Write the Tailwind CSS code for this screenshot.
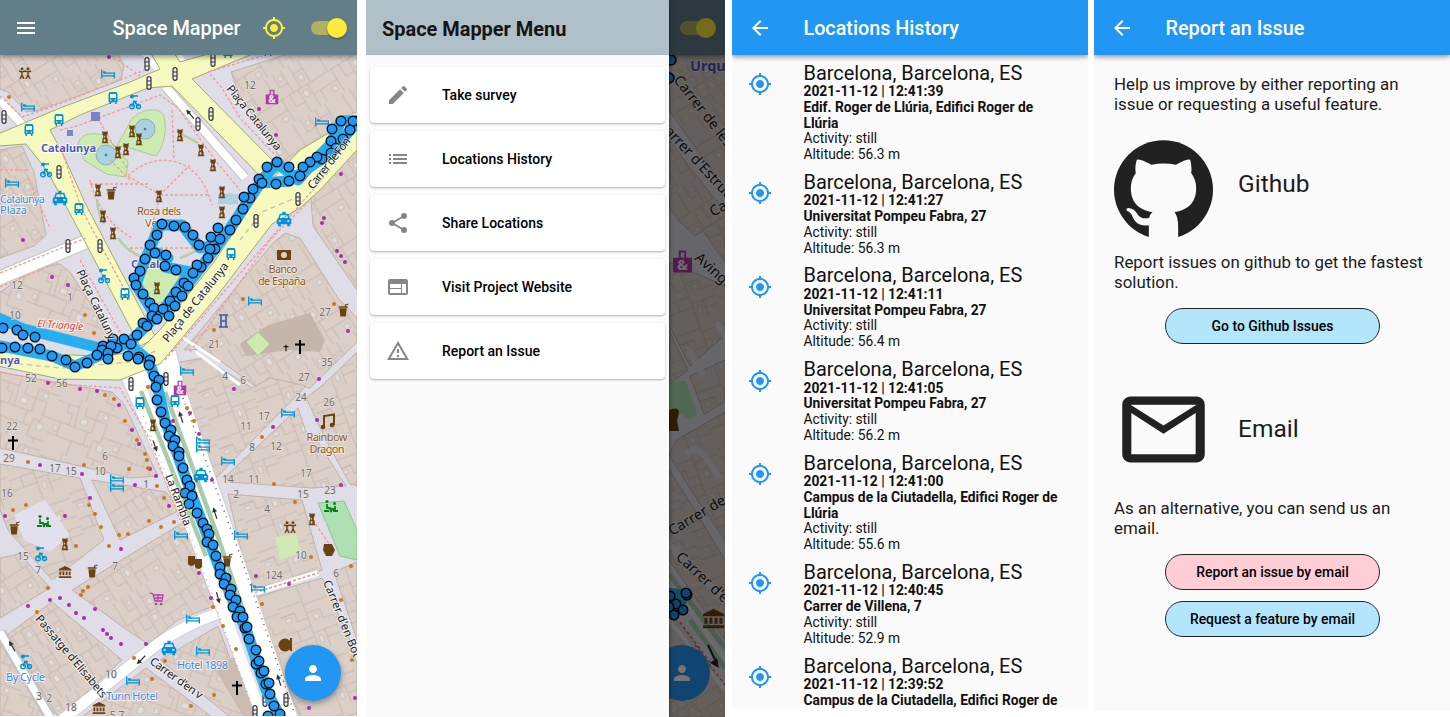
<!DOCTYPE html>
<html lang="en">
<head>
<meta charset="utf-8">
<title>Space Mapper</title>
<script src="https://cdn.jsdelivr.net/npm/@tailwindcss/browser@4"></script>
</head>
<body class="h-[717px] w-[1450px] overflow-hidden bg-white font-['Roboto',sans-serif] text-[#1b1b1b]">

<svg class="absolute size-0" aria-hidden="true">
  <defs>
    <symbol id="gps" viewBox="0 0 24 24"><path fill="currentColor" d="M12 8c-2.21 0-4 1.79-4 4s1.79 4 4 4 4-1.79 4-4-1.79-4-4-4zm8.94 3c-.46-4.17-3.77-7.48-7.94-7.94V1h-2v2.060C6.830 3.520 3.520 6.830 3.060 11H1v2h2.060c.46 4.170 3.770 7.480 7.940 7.940V23h2v-2.060c4.170-.46 7.480-3.770 7.940-7.940H23v-2h-2.060zM12 19c-3.870 0-7-3.130-7-7s3.130-7 7-7 7 3.130 7 7-3.130 7-7 7z"/></symbol>
    <symbol id="back" viewBox="0 0 24 24"><path fill="currentColor" d="M20 11H7.830l5.590-5.590L12 4l-8 8 8 8 1.410-1.410L7.830 13H20v-2z"/></symbol>
    <symbol id="person" viewBox="0 0 24 24"><path fill="currentColor" d="M12 12c2.210 0 4-1.790 4-4s-1.790-4-4-4-4 1.790-4 4 1.790 4 4 4zm0 2c-2.670 0-8 1.340-8 4v2h16v-2c0-2.660-5.330-4-8-4z"/></symbol>
    <symbol id="bed" viewBox="0 0 16 10" overflow="visible"><path d="M1 0V10M15 3V10M1 7H15M4 4H14" fill="none" stroke="#0092da" stroke-width="1.500"/><rect x="2.500" y="2" width="3" height="2.500" fill="#0092da"/></symbol>
    <symbol id="bus" viewBox="0 0 10 12"><path fill="#0092da" fill-rule="evenodd" d="M1.500 0h7L9.500 2v8H8.500v2H7v-2H3v2H1.500v-2H.5V2zM2 2v4h6V2zM2 7.500v1.200h1.500V7.500zM6.500 7.500v1.200H8V7.500z"/></symbol>
    <symbol id="taxi" viewBox="0 0 14 14"><path fill="#0092da" fill-rule="evenodd" d="M5.500 0h3v2H11l1.300 4L14 7.500V12h-1.500v2H10v-2H4v2H1.500v-2H0V7.500L1.700 6 3 2h2.500zM4 3.500L3.200 6h7.600L10 3.500zM2 8v1.500h2V8zm8 0v1.500h2V8z"/></symbol>
    <symbol id="light" viewBox="0 0 6 14"><rect x="1" y=".7" width="4" height="12.600" rx="2" fill="#eee" stroke="#333" stroke-width="1.200"/><path d="M1 5h4M1 9h4" stroke="#333"/></symbol>
    <symbol id="bike" viewBox="0 0 12 15" overflow="visible"><g fill="none" stroke="#0092da" stroke-width="1.400"><circle cx="3" cy="12" r="2.300"/><circle cx="9.500" cy="12" r="2"/><path d="M3 12L5 7l4.500 5M4 7h4M4 1.500h5"/></g><circle cx="3" cy="2" r="2" fill="#0092da"/></symbol>
    <symbol id="art" viewBox="0 0 8 14"><path fill="#6b4310" fill-rule="evenodd" d="M1 0h1v1h4V0h1v4L6 5v3l1 1v4h1v1H0v-1h1V9l1-1V5L1 4zM3 5.500v2h1v-2zM2.500 9.500V12h2V9.500z"/></symbol>
    <symbol id="cup" viewBox="0 0 12 14"><path fill="#6b4310" d="M1 5h8l-1 9H2zM0 3h10v1.500H0zM7 1l4-1v1L8 2v1H7z"/></symbol>
    <symbol id="people" viewBox="0 0 14 12"><path fill="none" stroke="#6b4310" stroke-width="1.400" d="M1 4l3 1 3-1 3 1 3-1M4 4v4l-2 4M4 8l2 4M10 4v4l-2 4M10 8l2 4"/><circle cx="4" cy="1.800" r="1.500" fill="#6b4310"/><circle cx="10" cy="1.800" r="1.500" fill="#6b4310"/></symbol>
    <symbol id="play" viewBox="0 0 14 14"><path fill="none" stroke="#0d8018" stroke-width="1.800" d="M3 5v4h3l1 4M11 7v3H8l-1 3M0 12h5M9 12h5"/><circle cx="3" cy="2.500" r="1.600" fill="#0d8018"/><circle cx="10.500" cy="4.500" r="1.500" fill="#0d8018"/></symbol>
    <symbol id="bag" viewBox="0 0 13 15"><path fill="#ac39ac" fill-rule="evenodd" d="M4 0h5v5h4v10H0V5h4zM5.300 1.300V5h2.400V1.300z"/><text x="6.500" y="13.500" text-anchor="middle" font-size="10" font-weight="700" fill="#f3e6f3">&amp;</text></symbol>
    <symbol id="cross" viewBox="0 0 10 14"><path fill="#000" d="M4 0h2v3.500h4v2H6V14H4V5.500H0v-2h4z"/></symbol>
    <symbol id="museum" viewBox="0 0 14 13"><path fill="#6b4310" d="M7 0l7 3.500V5H0V3.500zM1 6h2v4H1zm3.300 0h2v4h-2zm3.400 0h2v4h-2zM11 6h2v4h-2zM0 11h14v2H0z"/></symbol>
    <symbol id="arr" viewBox="0 0 6 12" overflow="visible"><path d="M3 12V3" stroke="#333" stroke-width="1.200"/><path d="M3 0l2.500 5h-5z" fill="#333"/></symbol>
    <pattern id="bldA" width="64" height="58" patternUnits="userSpaceOnUse" patternTransform="rotate(20)">
      <rect width="64" height="58" fill="#dbcfc8"/>
      <path fill="none" stroke="#c3b4aa" stroke-width=".8" d="M0 8h22v-8M22 8l2 20H0M24 28h18V4h22M42 14h12v14h10M10 28v14h-10M10 42h16v16M26 42h12V28M38 42h8v10h18M46 42V34h8v-6M12 8v8h6v12M30 4v10h12M54 52v6"/>
      <path fill="#dfdfdb" stroke="#c3b4aa" stroke-width=".7" d="M28 17h7v6h-7zM4 32h4v6H4zM48 6h5v5h-5zM52 36h6v7h-6z"/>
    </pattern>
    <pattern id="bldB" width="58" height="52" patternUnits="userSpaceOnUse" patternTransform="rotate(-32)">
      <rect width="58" height="52" fill="#dbcfc8"/>
      <path fill="none" stroke="#c3b4aa" stroke-width=".8" d="M0 26h58M8 0v26M17 0v15h9v11M26 15V0M35 0v26M46 0v10h-11M46 10v16M12 26v26M21 26v14h10v12M31 40V26M42 26v26M42 38h16M50 38v14M0 38h12"/>
      <path fill="#dfdfdb" stroke="#c3b4aa" stroke-width=".7" d="M20 5h4v5h-4zM38 14h5v6h-5zM34 30h5v7h-5zM3 42h5v5H3z"/>
    </pattern>
    <pattern id="bldC" width="52" height="60" patternUnits="userSpaceOnUse" patternTransform="rotate(-20)">
      <rect width="52" height="60" fill="#dbcfc8"/>
      <path fill="none" stroke="#c3b4aa" stroke-width=".8" d="M26 0v60M0 8h26M0 17h15v9h11M15 17H0M0 35h26M12 35v11H0M12 46h14M26 12h26M26 21h14v10h12M26 42h26M38 42v18M38 50h14"/>
      <path fill="#dfdfdb" stroke="#c3b4aa" stroke-width=".7" d="M32 24h5v6h-5zM4 20h6v4H4zM30 47h4v7h-4z"/>
    </pattern>
  </defs>
</svg>

<div class="flex items-start">

  <!-- Map screen -->
  <section class="relative h-[716px] w-[357px] shrink-0 overflow-hidden bg-[#dddce8]">
    <svg class="absolute top-0 left-0 block" width="357" height="717" viewBox="0 0 357 717" font-family="Noto Sans, Roboto, sans-serif">
      <rect width="357" height="717" fill="#dedde8"/>
      <!-- building blocks -->
      <g stroke="#bdaea4" stroke-width=".9" stroke-linejoin="round">
        <path fill="url(#bldB)" d="M0 50H116L124 66 121 80 40 110 26 112 8 92 0 89z"/>
        <path fill="url(#bldB)" d="M250 66L300 50H357V112L338 118 326 150 300 166 282 160 276 152 238 92 231 72z"/>
        <path fill="url(#bldB)" d="M0 150L22 146 34 172 46 235 34 246 0 258z"/>
        <path fill="url(#bldA)" d="M0 292L36 268 60 264 70 272 102 322 112 344 90 346 45 336 0 313z"/>
        <path fill="url(#bldB)" d="M310 186L357 150V290L313 226z"/>
        <path fill="url(#bldB)" d="M273 243L285 233 300 238 338 298 357 318V342L310 388 268 378 258 388 204 349 184 350z"/>
        <path fill="url(#bldA)" d="M0 372L60 383 112 392 124 404 158 476 130 478 80 466 0 448z"/>
        <path fill="url(#bldC)" d="M180 362L204 358 252 388 270 378 306 386 216 478 206 478 176 378z"/>
        <path fill="url(#bldC)" d="M298 408L306 432 314 436 346 486 312 488 228 482 226 476z"/>
        <path fill="url(#bldC)" d="M324 384L357 352V486L350 484 326 440 306 398z"/>
        <path fill="url(#bldC)" d="M0 464L80 478 104 540 52 580 8 530 0 510z"/>
        <path fill="url(#bldB)" d="M92 480L166 492 180 510 120 540z"/>
        <path fill="url(#bldB)" d="M0 558L20 554 50 588 0 618z"/>
        <path fill="url(#bldB)" d="M72 590L184 522 214 606 178 620 148 644 130 632z"/>
        <path fill="url(#bldB)" d="M8 634L52 602 122 660 72 706 58 717z"/>
        <path fill="url(#bldA)" d="M0 640L46 717H0z"/>
        <path fill="url(#bldA)" d="M160 660L218 626 252 717H230z"/>
        <path fill="url(#bldA)" d="M82 717L146 668 212 717z"/>
        <path fill="url(#bldC)" d="M228 494L302 500 322 570 250 590z"/>
        <path fill="url(#bldC)" d="M252 598L322 578 350 640 357 664V717H300z"/>
        <path fill="url(#bldC)" d="M334 572L357 562V640z"/>
      </g>
      <path fill="#c5b5ab" d="M268 325L310 313 325 340 320 352 290 350 246 356 240 344z"/>
      <path fill="#cbbbb1" d="M214 668L238 655 262 717H244z"/>
      <path fill="#cdebb0" stroke="#9dbb80" stroke-width=".6" d="M246 342L258 332 270 344 258 356z"/>
      <path fill="#cfe8b4" d="M275 537L296 534 302 553 280 560z"/>
      <path fill="#aee0b4" stroke="#7fbf87" stroke-width=".8" d="M318 503L344 501 357 530V560L340 556z"/>
      <path fill="#e1e0ec" d="M14 515L45 500 70 535 50 552 24 540z"/>

      <!-- gardens -->
      <g fill="#cdebb0" stroke="#a8bd83" stroke-width=".8">
        <path d="M78 145C80 132 96 132 105 136L118 150 128 162 126 177 106 174 84 160z"/>
        <path d="M130 122C138 108 160 106 164 116 168 134 162 148 156 156L130 148 117 146z"/>
        <path d="M146 250L160 262 180 276 164 302 152 304 140 280z"/>
      </g>
      <g fill="#aad3df" stroke="#7fb1c0" stroke-width="1"><circle cx="106" cy="155" r="10"/><circle cx="145" cy="129" r="10"/></g>
      <g fill="#3b6fd0"><circle cx="106" cy="155" r="1.300"/><circle cx="145" cy="129" r="1.300"/></g>
      <circle cx="230" cy="199" r="6" fill="#aad3df"/><path fill="#aad3df" d="M218 194h20v10h-20z"/>
      <path d="M97 200Q98 215 104 224M180 133l18 10M118 238q10 14 22 18M180 258q10-4 18-8" fill="none" stroke="#b6cfa0" stroke-width="2.500"/>

      <!-- white streets -->
      <g fill="none" stroke="#c7c3c3" stroke-linejoin="round">
        <path d="M-3 279L88 241" stroke-width="15"/><path d="M-3 279L88 241" stroke="#fff" stroke-width="13"/>
        <path d="M0 100L34 138M165 86L245 178" stroke-width="10"/><path d="M0 100L34 138M165 86L245 178" stroke="#fff" stroke-width="8"/>
        <path d="M143 50L162 74M178 55l6 10" stroke="#fff" stroke-width="7"/>
        <path d="M0 632L50 717M62 720L150 650Q180 626 222 612" stroke-width="12"/><path d="M0 632L50 717" stroke="#fff" stroke-width="7"/><path d="M62 720L150 650Q180 626 222 612" stroke="#fff" stroke-width="11"/>
        <path d="M250 594L318 573" stroke="#fff" stroke-width="6"/><path d="M250 594L318 573" stroke="#f08a86" stroke-width="1.500" stroke-dasharray="3 2"/>
        <path d="M180 336l40 26" stroke="#fff" stroke-width="3"/><path d="M196 352L240 385" stroke="#fff" stroke-width="3"/>
      </g>
      <path fill="#fff" stroke="#c7c3c3" stroke-width=".8" d="M122 380L136 362 176 350 184 384 234 530 298 717H256L216 610 186 530z"/>
      <path d="M150 384L216 560 266 700" fill="none" stroke="#dedde8" stroke-width="9"/>
      <path d="M141 391L206 556M165 392L219 540 274 700" fill="none" stroke="#a9cba8" stroke-width="4.500"/>
      <path d="M133 390L192 540 250 700" fill="none" stroke="#aaa" stroke-width="1.200" stroke-dasharray="1 6"/>
      <path d="M183 398L239 552 294 712" fill="none" stroke="#555" stroke-width="1.400" stroke-dasharray="1 5"/>

      <!-- yellow roads -->
      <g fill="#f7fabf" stroke="#a3aa6a" stroke-width="1" stroke-linejoin="round">
        <path d="M-2 134L60 108 130 82 160 69 149 50H172L180 62 222 50H262L192 79 282 170 262 178 172 86 148 88 80 115 50 130 62 152 86 205 156 338 140 346 48 172 26 144 -2 146z"/>
        <path d="M-2 350L40 354 100 356 138 352 160 330 214 262 262 190 300 150 357 116V150L320 190 300 208 272 224 214 300 160 364 120 380 60 379 -2 366z"/>
      </g>
      <path d="M0 362L60 368 130 362 158 350M240 240L262 212 300 196" fill="none" stroke="#cfb9ad" stroke-width="1.300" stroke-dasharray="5 4"/>

      <!-- footpaths -->
      <g fill="none" stroke="#f59a96" stroke-width="1.300" stroke-dasharray="3 2">
        <path d="M0 96L22 117 60 104 150 68M118 60L140 76M210 74L222 88 240 118 282 162M208 72L262 56M60 130L80 125 160 95 178 108 215 160 240 190M100 122L128 170M62 152L82 210 130 300"/>
        <path d="M128 176Q150 155 176 162T212 205M90 180Q100 220 132 238M128 176L160 195 150 235M160 195H210M160 195L190 165M90 184H150M110 160L130 180M172 110L174 160M130 248H200"/>
        <path d="M0 273L86 238M0 287L60 262M28 178L50 228M80 260L130 350M0 372L60 384 120 388 150 440 180 520M165 360L250 262 330 170M190 352L270 240 310 200M0 170H30M310 516L330 545"/>
      </g>
      <g fill="#7b83c2"><path d="M91 112h9v9h-9zM67 130h6v6h-6z"/></g>

      <g id="poi"></g>

      <!-- place labels partly under the track -->
      <g font-size="11" stroke="#fff" stroke-opacity=".7" stroke-width="2" paint-order="stroke">
        <text x="145" y="227" fill="#8a5a1e">Ve</text>
        <text x="131" y="268" fill="#5257b5" font-weight="700">Catal</text>
      </g>

      <!-- recorded track -->
      <g fill="none" stroke="#27aef0" stroke-width="11" stroke-linejoin="round" stroke-linecap="round">
        <path d="M357 121H341L330 145 317 158 298 180 277 163 262 180 249 199 236 220 208 258 176 300 152 320 130 342 108 352 75 366 52 356 0 346M-5 317L24 329 100 348"/>
        <path d="M357 122L331 153 289 181 262 183M160 225H182L200 248 211 246M160 225L143 265 136 285 152 310M155 252L168 258M165 267L190 272 165 308M130 345L148 360 156 380 165 420 190 490 220 570 246 630 266 690 280 716"/>
      </g>
      <g id="track" fill="#2196f3" stroke="#08131f" stroke-width="1.400"></g>

      <!-- street and place names -->
      <g font-size="11.500" fill="#222" stroke="#fff" stroke-opacity=".6" stroke-width="2" paint-order="stroke">
        <text transform="translate(226 89) rotate(51)" textLength="80">Plaça Catalunya</text>
        <text transform="translate(76 272) rotate(64)" textLength="76">Plaça Cataluny</text>
        <text transform="translate(168 343) rotate(-51.500)" textLength="98">Plaça de Catalunya</text>
        <text transform="translate(313 190) rotate(-52)" textLength="62">Carrer de Fon</text>
        <text transform="translate(165 476) rotate(69)" textLength="54">La Rambla</text>
        <text transform="translate(35 619) rotate(50)" textLength="104">Passatge d'Elisabets</text>
        <text transform="translate(149 663) rotate(36)" textLength="62">Carrer d'en v</text>
        <text transform="translate(323 582) rotate(68)" textLength="82">Carrer d'en Bot</text>
      </g>
      <g font-size="11" fill="#8a5a1e" text-anchor="middle" stroke="#f2ece6" stroke-opacity=".7" stroke-width="2" paint-order="stroke">
        <text x="159" y="215" textLength="44">Rosa dels</text>
        <text x="283" y="273" textLength="29">Banco</text><text x="282" y="285" textLength="48">de España</text>
        <text x="327" y="441" textLength="41">Rainbow</text><text x="327" y="453" textLength="35">Dragon</text>
      </g>
      <g font-size="11" stroke="#fff" stroke-opacity=".7" stroke-width="2" paint-order="stroke">
        <text x="41" y="152" fill="#5257b5" font-weight="700" textLength="55">Catalunya</text>
        <text x="0" y="364" fill="#5257b5" font-weight="700">nya</text>
        <text x="0" y="203" fill="#3f85e0" textLength="45">Catalunya</text><text x="0" y="214" fill="#3f85e0">Plaza</text>
        <text x="37" y="327" fill="#e0413a" font-style="italic" font-size="10.500" textLength="46" transform="rotate(4 37 327)">El Triangle</text>
        <text x="6" y="681" fill="#3f85e0" textLength="39">By Cycle</text>
        <text x="177" y="669" fill="#3f85e0" textLength="51">Hotel 1898</text>
        <text x="106" y="700" fill="#3f85e0" textLength="52">Turin Hotel</text>
      </g>
      <g id="nums" font-size="10" fill="#6d6a6a" text-anchor="middle" stroke="#e6dfdb" stroke-width="1.500" paint-order="stroke"></g>
    </svg>

    <header class="relative flex h-[55px] items-center bg-[#617e89] shadow-[0_2px_5px_rgba(0,0,0,0.4)]">
      <svg class="ml-[14px] size-6 text-white" viewBox="0 0 24 24"><path fill="currentColor" d="M3 18h18v-2H3v2zm0-5h18v-2H3v2zm0-7v2h18V6H3z"/></svg>
      <h1 class="ml-[74.500px] w-[129px] pt-[2px] text-[19.900px] leading-6 font-medium whitespace-nowrap text-white">Space Mapper</h1>
      <svg class="ml-5 size-[24px] text-[#ffeb3b]"><use href="#gps"/></svg>
      <div class="relative ml-[25px] h-[14px] w-[34px] rounded-full bg-[#b1b162]">
        <span class="absolute -top-[3px] left-[16px] size-5 rounded-full bg-[#ffeb3b] shadow-[0_1px_2px_rgba(0,0,0,0.4)]"></span>
      </div>
    </header>
    <button class="absolute top-[645px] left-[285px] flex size-14 items-center justify-center rounded-full bg-[#2196f3] text-white shadow-[0_3px_6px_rgba(0,0,0,0.35)]">
      <svg class="size-6"><use href="#person"/></svg>
    </button>
  </section>

  <!-- Drawer screen -->
  <section class="relative ml-[9px] flex h-[717px] w-[359px] shrink-0 overflow-hidden">
    <aside class="z-10 w-[303px] shrink-0 bg-[#fafafa] shadow-[0_0_4px_rgba(0,0,0,0.6)]">
      <header class="flex h-[55px] items-center border-b border-[#a9b8bf] bg-[#b0c0c8] pt-[3px] pl-4">
        <h2 class="text-[19.950px] leading-6 font-bold text-[#151515]">Space Mapper Menu</h2>
      </header>
      <nav class="flex flex-col gap-2 px-1 pt-3 text-[14px] font-medium text-black">
        <a class="flex h-14 items-center rounded-[4px] bg-white pl-4 shadow-[0_1px_2px_rgba(0,0,0,0.3)]"><svg class="mr-8 size-6 text-[#868686]" viewBox="0 0 24 24"><path fill="currentColor" d="M3 17.250V21h3.750L17.810 9.940l-3.750-3.750L3 17.250zM20.710 7.040c.39-.39.39-1.020 0-1.410l-2.340-2.340c-.39-.39-1.020-.39-1.410 0l-1.830 1.830 3.750 3.750 1.830-1.830z"/></svg>Take survey</a>
        <a class="flex h-14 items-center rounded-[4px] bg-white pl-4 shadow-[0_1px_2px_rgba(0,0,0,0.3)]"><svg class="mr-8 size-6 text-[#868686]" viewBox="0 0 24 24"><path fill="currentColor" d="M3 13h2v-2H3v2zm0 4h2v-2H3v2zm0-8h2V7H3v2zm4 4h14v-2H7v2zm0 4h14v-2H7v2zM7 7v2h14V7H7z"/></svg>Locations History</a>
        <a class="flex h-14 items-center rounded-[4px] bg-white pl-4 shadow-[0_1px_2px_rgba(0,0,0,0.3)]"><svg class="mr-8 size-6 text-[#868686]" viewBox="0 0 24 24"><g fill="currentColor"><circle cx="18" cy="5" r="3"/><circle cx="6" cy="12" r="3"/><circle cx="18" cy="19" r="3"/></g><path d="M18 5L6 12l12 7" fill="none" stroke="currentColor" stroke-width="1.800"/></svg>Share Locations</a>
        <a class="flex h-14 items-center rounded-[4px] bg-white pl-4 shadow-[0_1px_2px_rgba(0,0,0,0.3)]"><svg class="mr-8 size-6 text-[#868686]" viewBox="0 0 24 24"><path fill="currentColor" d="M20 4H4c-1.100 0-1.990.9-1.990 2L2 18c0 1.100.9 2 2 2h16c1.100 0 2-.9 2-2V6c0-1.100-.9-2-2-2zm-5 14H4v-4h11v4zm0-5H4V9h11v4zm5 5h-4V9h4v9z"/></svg>Visit Project Website</a>
        <a class="flex h-14 items-center rounded-[4px] bg-white pl-4 shadow-[0_1px_2px_rgba(0,0,0,0.3)]"><svg class="mr-8 size-6 text-[#868686]" viewBox="0 0 24 24"><path fill="currentColor" d="M12 5.990L19.530 19H4.470L12 5.990M12 2L1 21h22L12 2zm1 14h-2v2h2v-2zm0-6h-2v4h2v-4z"/></svg>Report an Issue</a>
      </nav>
    </aside>
    <div class="relative h-[717px] w-14 overflow-hidden">
      <svg class="absolute top-0 left-0 block" width="56" height="717" viewBox="669 0 56 717" font-family="Noto Sans, Roboto, sans-serif">
        <rect x="669" width="56" height="717" fill="#dedde8"/>
        <g stroke="#bdaea4" stroke-width="1">
          <path fill="url(#bldB)" d="M669 40H725V190L669 110z"/>
          <path fill="url(#bldB)" d="M669 140L725 212V218L695 236 680 222 669 208z"/>
          <path fill="url(#bldC)" d="M669 262L725 286V335L690 366 669 325zM702 230L725 216V262z"/>
          <path fill="url(#bldC)" d="M669 330L688 370 669 384zM690 376L725 360V403L704 414z"/>
          <path fill="url(#bldC)" d="M676 440L725 412V540L700 504 669 455zM669 470L695 510 725 560V640L669 560z"/>
          <path fill="url(#bldB)" d="M669 610L700 650 725 690V717H669z"/>
        </g>
        <path d="M690 352L702 374M669 440L725 406M688 452Q700 446 706 458L718 476M669 545L725 600M718 325L725 335" fill="none" stroke="#dedde8" stroke-width="6" stroke-linecap="round"/>
        <path d="M669 580L725 660M669 620L725 690" stroke="#e8e6ea" stroke-width="4"/>
        <path d="M669 574L725 648M690 620L725 668" fill="none" stroke="#a9cba8" stroke-width="5"/>
        <path d="M680 622L712 665M695 645L725 685" stroke="#f05a56" stroke-width="1.500" stroke-dasharray="3 3" fill="none"/>
        <path fill="#aee0b4" d="M669 382L686 381 697 414 690 420 669 406z"/>
        <path fill="#6b4310" d="M669 410q10-4 10 3l-2 8 2 10h-10z"/>
        <use href="#bag" x="673" y="250" width="19" height="23"/>
        <use href="#museum" x="703" y="608" width="21" height="21"/>
        <path d="M708 645L716 662" stroke="#222" stroke-width="2"/><path d="M719 668l-9-5 7-5z" fill="#222"/>
        <path fill="#29abe2" d="M669 588L690 590 684 612 669 618z"/>
        <g fill="#2196f3" stroke="#000" stroke-width="1.600"><circle cx="671" cy="60" r="5"/><circle cx="669" cy="78" r="5"/><circle cx="687" cy="595" r="4.700"/><circle cx="686" cy="593" r="4.700"/><circle cx="670" cy="596" r="4.700"/><circle cx="676" cy="604" r="4.700"/><circle cx="683" cy="610" r="4.700"/><circle cx="674" cy="615" r="4.700"/><circle cx="669" cy="607" r="4.700"/></g>
        <g font-size="14.500" fill="#1a1a1a" stroke="#fff" stroke-opacity=".4" stroke-width="2" paint-order="stroke">
          <text x="690" y="71" fill="#4a50c0" font-weight="700">Urqui</text>
          <text transform="translate(673 80) rotate(52)">Carrer de les</text>
          <text transform="translate(664 132) rotate(47)">arrer d'Estruc</text>
          <text transform="translate(713 217) rotate(-30)">Car</text>
          <text transform="translate(694 259) rotate(42)">Avinguda</text>
          <text transform="translate(672 536) rotate(-31)">Carrer de l</text>
          <text transform="translate(675 558) rotate(43)">Carrer d'en</text>
        </g>
      </svg>
      <header class="relative flex h-[55px] items-center bg-[#617e89] shadow-[0_2px_5px_rgba(0,0,0,0.4)]">
        <div class="relative ml-[11px] h-[14px] w-[34px] rounded-full bg-[#b1b162]">
          <span class="absolute -top-[3px] left-[16px] size-5 rounded-full bg-[#ffeb3b]"></span>
        </div>
      </header>
      <div class="absolute top-[645px] -left-[15px] flex size-14 items-center justify-center rounded-full bg-[#2196f3] text-white"><svg class="size-6"><use href="#person"/></svg></div>
      <div class="absolute inset-0 bg-black/54"></div>
    </div>
  </section>

  <!-- History screen -->
  <section class="ml-[7px] h-[708px] w-[356px] shrink-0 overflow-hidden bg-[#fafafa]">
    <header class="relative z-10 flex h-[55px] items-center bg-[#2196f3] text-white shadow-[0_2px_5px_rgba(0,0,0,0.4)]">
      <svg class="ml-[16px] size-6"><use href="#back"/></svg>
      <h2 class="ml-[31.500px] pt-[2px] text-[19.750px] leading-6 font-medium">Locations History</h2>
    </header>
    <ul id="history" class="flex flex-col gap-[9.600px] pt-[7.500px]"></ul>
    <template id="entry">
      <li class="flex items-start">
        <svg class="mt-[9.500px] ml-4 size-6 shrink-0 text-[#2196f3]"><use href="#gps"/></svg>
        <div class="-mb-[0.500px] ml-[31.500px] w-[262px] text-[13.800px] leading-[15.750px] text-[#111]">
          <p class="mb-[0.500px] text-[19.950px] leading-[21px]">Barcelona, Barcelona, ES</p>
          <p class="font-bold" data-k="time"></p>
          <p class="font-bold" data-k="place"></p>
          <p>Activity: still</p>
          <p data-k="alt"></p>
        </div>
      </li>
    </template>
  </section>

  <!-- Report screen -->
  <section class="ml-[6px] h-[711px] w-[356px] shrink-0 overflow-hidden bg-[#fafafa]">
    <header class="flex h-[55px] items-center bg-[#2196f3] text-white shadow-[0_2px_5px_rgba(0,0,0,0.4)]">
      <svg class="ml-[16px] size-6"><use href="#back"/></svg>
      <h2 class="ml-[31.500px] pt-[2px] text-[19.850px] leading-6 font-medium">Report an Issue</h2>
    </header>
    <div class="flex flex-col px-5 pt-[19px] text-[16.870px] leading-5 text-[#1c1c1c]">
      <p class="whitespace-nowrap">Help us improve by either reporting an<br>issue or requesting a useful feature.</p>
      <div class="mt-[26px] flex h-[97px] items-center">
        <svg width="99" height="97" viewBox="71.500 421 297 291"><circle cx="220" cy="570" r="148.500" fill="#212121"/><path fill="#fafafa" d="M140 480Q148 476 184 495Q220 488 257 495Q292 476 300 480Q306 500 303 520Q318 540 318 565C318 612 290 632 253 637Q264 652 264 680V725H176V677C150 680 136 670 129 655C123 640 118 636 110 633Q106 626 114 625C126 625 134 632 141 642C149 655 160 658 177 655Q178 645 187 637C150 632 122 612 122 565Q122 540 137 520Q133 500 140 480z"/></svg>
        <span class="mt-[-9px] ml-[25px] text-[24.500px] leading-7">Github</span>
      </div>
      <p class="mt-[15px] whitespace-nowrap">Report issues on github to get the fastest<br>solution.</p>
      <button class="mt-4 ml-[51px] h-9 w-[215px] rounded-full border-[1.500px] border-[#262626] bg-[#b3e5fc] text-[13.950px] font-medium text-black">Go to Github Issues</button>
      <div class="mt-[35.500px] flex h-[99px] items-center">
        <svg class="size-[99px]" viewBox="0 0 24 24"><path fill="#212121" d="M20 4H4c-1.100 0-2 .9-2 2v12c0 1.100.9 2 2 2h16c1.100 0 2-.9 2-2V6c0-1.100-.9-2-2-2zm-.2 14H4.200V8l7.800 5 7.800-5v10zM12 11L4 6h16l-8 5z"/></svg>
        <span class="ml-[25px] text-[24.500px] leading-7">Email</span>
      </div>
      <p class="mt-[19.500px] whitespace-nowrap">As an alternative, you can send us an<br>email.</p>
      <button class="mt-4 ml-[51px] h-9 w-[215px] rounded-full border-[1.500px] border-[#262626] bg-[#ffcdd5] text-[13.900px] font-medium text-black">Report an issue by email</button>
      <button class="mt-[11px] ml-[51px] h-9 w-[215px] rounded-full border-[1.500px] border-[#262626] bg-[#b3e5fc] text-[13.900px] font-medium text-black">Request a feature by email</button>
    </div>
  </section>
</div>

<script>
const visits = [
  ['12:41:39', 'Edif. Roger de Llúria, Edifici Roger de Llúria', '56.3'],
  ['12:41:27', 'Universitat Pompeu Fabra, 27', '56.3'],
  ['12:41:11', 'Universitat Pompeu Fabra, 27', '56.4'],
  ['12:41:05', 'Universitat Pompeu Fabra, 27', '56.2'],
  ['12:41:00', 'Campus de la Ciutadella, Edifici Roger de Llúria', '55.6'],
  ['12:40:45', 'Carrer de Villena, 7', '52.9'],
  ['12:39:52', 'Campus de la Ciutadella, Edifici Roger de', ''],
];
const tpl = document.getElementById('entry');
for (const [time, place, alt] of visits) {
  const n = tpl.content.cloneNode(true);
  n.querySelector('[data-k=time]').textContent = '2021-11-12 | ' + time;
  n.querySelector('[data-k=place]').textContent = place;
  const a = n.querySelector('[data-k=alt]');
  if (alt) a.textContent = 'Altitude: ' + alt + ' m';
  else { a.previousElementSibling.remove(); a.remove(); }
  document.getElementById('history').append(n);
}

const pts = '357,121 341,121 353,121 332,129 350,130 331,141 343,139 336,148 331,153 322,159 317,157 310,162 303,167 300,176 289,167 277,162 267,167 259,179 262,183 276,184 289,181 253,189 250,198 244,197 243,209 236,220 230,230 218,228 211,237 220,239 215,249 210,249 208,258 201,267 197,265 193,273 199,245 193,235 185,227 174,226 162,224 157,235 150,245 155,253 166,255 145,259 140,271 165,266 176,270 134,278 136,285 143,294 150,303 154,308 163,309 184,283 188,286 176,292 182,296 170,301 175,306 169,316 152,316 157,319 143,323 147,326 137,335 113,339 124,339 131,344 103,346 117,348 102,350 111,346 97,355 108,353 128,356 139,357 150,360 3,328 17,330 23,335 35,337 2,348 15,347 28,348 40,349 52,356 66,360 75,367 87,363 108,359 138,359 149,365 154,376 159,380 156,387 157,400 161,412 165,423 171,430 169,436 175,440 173,446 179,452 179,456 183,468 187,480 190,486 185,493 192,496 189,504 197,513 203,523 207,529 209,534 207,542 213,545 216,556 220,567 220,574 226,578 224,584 231,589 230,595 236,600 233,607 240,611 237,617 243,617 245,628 247,627 249,639 256,650 256,664 259,661 261,673 264,671 266,684 269,683 270,694 274,706 268,716 280,714';
document.getElementById('track').innerHTML = pts.split(' ').map(p => { const [x, y] = p.split(','); return `<circle cx="${x}" cy="${y}" r="4.800"/>`; }).join('');

const poi = [
  ['bed',15,9,'108,74 28,107 322,122 12,183 255,301 187,371 288,413 228,461 203,441 203,448 117,479 117,487 181,535 241,535 258,588 193,619 203,651 133,681'],
  ['bus',10,12,'113,98 59,120 29,130 79,209 231,254 125,294 140,403 175,401 228,52 268,50'],
  ['taxi',15,15,'60,198 284,219 201,475 169,648'],
  ['light',6,14,'147,64 149,83 175,74 213,60 4,117 198,124 211,114 59,172 68,246 100,246 256,221 298,199 131,384 166,379 265,700 286,700 255,712'],
  ['bike',12,15,'135,102 46,170 104,276 41,554 26,662'],
  ['art',7,14,'105,137 132,131 118,152 126,149 139,139 180,135 201,150 213,165 159,196 98,190 103,216 113,233 157,288 222,192 222,212 153,425 65,544 312,519'],
  ['cup',11,14,'112,193 344,310 15,528 93,571 228,560'],
  ['people',14,12,'25,73 290,527'],
  ['play',14,14,'44,521 331,506'],
  ['bag',13,15,'272,97 180,388'],
  ['cross',11,14,'300,347 13,443 237,688'],
  ['cross',6,7,'286,348'],
  ['museum',13,13,'65,572 99,708'],
];
let s = poi.map(([id, w, h, list]) => list.split(' ').map(p => { const [x, y] = p.split(','); return `<use href="#${id}" x="${x - w / 2}" y="${y - h / 2}" width="${w}" height="${h}"/>`; }).join('')).join('');
s += '<rect x="277" y="250" width="14" height="10" fill="#6b4310"/><circle cx="284" cy="255" r="3" fill="#dbcfc8"/>';
s += '<path d="M324 427V416l10-1.500V425" fill="none" stroke="#6b4310" stroke-width="2"/><circle cx="323" cy="427" r="2.300" fill="#6b4310"/><circle cx="332" cy="425" r="2.300" fill="#6b4310"/>';
s += '<path d="M219 315h9M219 327h9M221 315v12M226 315v12M221 321h5" fill="none" stroke="#3f55b5" stroke-width="1.600"/>';
s += '<path d="M150 593l3 1 2 7h7l1-6h-9M155 598h8M158 594v7" fill="none" stroke="#b23db2" stroke-width="1.300"/><circle cx="156" cy="604" r="1.300" fill="#b23db2"/><circle cx="161" cy="604" r="1.300" fill="#b23db2"/>';
s += '<circle cx="285" cy="645" r="6.500" fill="#6b4310"/><path d="M291 638v13" stroke="#6b4310" stroke-width="2"/><path d="M188 556h7v8q-4 4-7 0zM195 559h7v8q-4 4-7 0zM324 544h8l3 6-3 6h-6l-3-6z" fill="#6b4310"/>';
s += [[190,114,-40],[155,446,160],[181,417,-18],[215,513,-18],[218,598,165],[141,660,225],[12,646,-30],[279,680,-18]].map(([x, y, a]) => `<use href="#arr" x="-3" y="-6" width="6" height="12" transform="translate(${x} ${y}) rotate(${a})"/>`).join('');
const purple = '109,57 259,109 276,135 341,174 324,218 322,223 337,251 341,256 345,262 23,240 52,277 68,285 348,331 48,383 80,389 97,391 119,405 132,430 139,444 150,469 156,476 135,485 40,465 82,474 90,498 65,516 169,506 190,413 199,434 212,480 173,421 234,389 273,427 317,420 341,485 319,379 50,600 60,598 69,605 76,613 84,618 95,609 103,630 107,634 111,638 121,644 146,644 121,549 199,573 211,598 256,576 289,584 309,708 355,698 5,516 28,606';
const orange = '9,97 243,299 214,330 85,315 94,333 148,387 105,395 114,399 125,421 137,440 145,454 147,460 148,468 129,469 28,462 84,465 157,486 89,505 95,514 101,527 119,535 128,534 149,521 161,527 164,498 174,522 187,408 194,421 262,437 274,484 295,502 76,546 109,546 48,588 37,612 83,591 88,587 81,595 134,658 165,661 152,679 191,706 213,607 223,626 236,649 214,695 262,604 311,557 341,600 352,660 351,566 13,510 26,505 334,304';
const dots = (list, c) => list.split(' ').map(p => { const [x, y] = p.split(','); return `<circle cx="${x}" cy="${y}" r="2" fill="${c}"/>`; }).join('');
document.getElementById('poi').innerHTML = s + dots(purple, '#a52fae') + dots(orange, '#c97819');

const nums = '12@250,89 12@17,289 10@15,319 1@70,301 21@214,348 27@325,316 52@31,382 56@62,387 22@12,430 29@9,462 17@55,472 15@71,475 10@100,475 6@105,460 1@146,488 16@7,497 4@225,380 6@243,384 27@304,381 24@301,401 26@329,406 35@327,366 17@264,420 11@246,430 8@252,451 12@276,450 17@306,477 14@228,483 11@254,483 2@236,498 15@303,498 23@330,494 4@267,513 15@23,560 7@38,574 7@115,570 10@301,559 6@336,577 124@274,579 10@111,678 3@39,700 2@49,702 18@71,711 5-7@117,719';
document.getElementById('nums').innerHTML = nums.split(' ').map(n => { const [t, p] = n.split('@'); const [x, y] = p.split(','); return `<text x="${x}" y="${y}">${t}</text>`; }).join('');
</script>
</body>
</html>
